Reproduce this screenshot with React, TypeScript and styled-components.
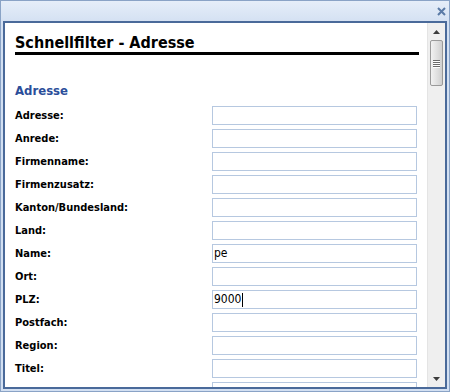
import styled, { createGlobalStyle } from "styled-components";

const GlobalStyle = createGlobalStyle`
  html, body {
    margin: 0;
    padding: 0;
    background: #ffffff;
  }
`;

const Window = styled.div`
  width: 450px;
  height: 392px;
  box-sizing: border-box;
  border: 1px solid #8aa3c6;
  background: linear-gradient(#e6eef9, #d3e0f2 22px, #d3e0f2);
  display: flex;
  flex-direction: column;
  padding: 0 2px 2px 2px;
  font-family: "DejaVu Sans Condensed", "DejaVu Sans", sans-serif;
`;

const TitleBar = styled.div`
  height: 20px;
  display: flex;
  align-items: center;
  justify-content: flex-end;
  padding-right: 1px;
`;

const CloseButton = styled.span`
  width: 10px;
  height: 10px;
  display: flex;
  align-items: center;
  justify-content: center;
`;

const Frame = styled.div`
  flex: 1;
  display: flex;
  border: 2px solid #4a6a9a;
  background: #ffffff;
  min-height: 0;
`;

const Content = styled.div`
  flex: 1;
  overflow: hidden;
  padding: 10px 0 0 10px;
`;

const Heading = styled.h1`
  margin: 0;
  width: 404px;
  font-size: 16px;
  font-weight: bold;
  color: #000000;
  line-height: 19px;
  border-bottom: 3px solid #000000;
`;

const Section = styled.h2`
  margin: 28px 0 7px 0;
  font-size: 13px;
  font-weight: bold;
  color: #2b4e9a;
  line-height: 16px;
`;

const Form = styled.div`
  display: flex;
  flex-direction: column;
  gap: 4px;
`;

const Row = styled.div`
  display: grid;
  grid-template-columns: 197px 205px;
  align-items: center;
  height: 19px;
`;

const Label = styled.label`
  font-size: 11px;
  font-weight: bold;
  color: #000000;
`;

const Field = styled.div`
  height: 19px;
  box-sizing: border-box;
  border: 1px solid #b6c8e0;
  background: #ffffff;
  font-family: "DejaVu Sans Condensed", "DejaVu Sans", sans-serif;
  font-size: 12px;
  line-height: 17px;
  padding-left: 1px;
  color: #000000;
  display: flex;
  align-items: center;
`;

const Caret = styled.span`
  display: inline-block;
  width: 1px;
  height: 14px;
  background: #000000;
  margin-left: 1px;
`;

const Scrollbar = styled.div`
  width: 17px;
  background: #efefef;
  border-left: 1px solid #e4e4e4;
  display: flex;
  flex-direction: column;
  align-items: center;
`;

const ArrowBox = styled.div`
  height: 17px;
  width: 17px;
  display: flex;
  align-items: center;
  justify-content: center;
`;

const Thumb = styled.div`
  width: 13px;
  height: 46px;
  box-sizing: border-box;
  border: 1px solid #9a9a9a;
  border-radius: 2px;
  background: linear-gradient(90deg, #f2f2f2, #dedede 60%, #cfcfcf);
  display: flex;
  flex-direction: column;
  align-items: center;
  justify-content: center;
  gap: 1px;
`;

const Grip = styled.span`
  width: 7px;
  height: 1px;
  background: #6b6b6b;
  box-shadow: 0 1px 0 #ffffff;
`;

const Track = styled.div`
  flex: 1;
`;

const fields: { label: string; value?: string; caret?: boolean }[] = [
  { label: "Adresse:" },
  { label: "Anrede:" },
  { label: "Firmenname:" },
  { label: "Firmenzusatz:" },
  { label: "Kanton/Bundesland:" },
  { label: "Land:" },
  { label: "Name:", value: "pe" },
  { label: "Ort:" },
  { label: "PLZ:", value: "9000", caret: true },
  { label: "Postfach:" },
  { label: "Region:" },
  { label: "Titel:" },
  { label: "" },
];

function App() {
  return (
    <>
      <GlobalStyle />
      <Window>
        <TitleBar>
          <CloseButton>
            <svg width="9" height="9" viewBox="0 0 9 9">
              <path d="M1 1 L8 8 M8 1 L1 8" stroke="#5a7aa6" strokeWidth="2" />
            </svg>
          </CloseButton>
        </TitleBar>
        <Frame>
          <Content>
            <Heading>Schnellfilter - Adresse</Heading>
            <Section>Adresse</Section>
            <Form>
              {fields.map((f, i) => (
                <Row key={i}>
                  <Label>{f.label}</Label>
                  <Field>
                    {f.value}
                    {f.caret && <Caret />}
                  </Field>
                </Row>
              ))}
            </Form>
          </Content>
          <Scrollbar>
            <ArrowBox>
              <svg width="7" height="4" viewBox="0 0 7 4">
                <path d="M0 4 L3.5 0 L7 4 Z" fill="#3c3c3c" />
              </svg>
            </ArrowBox>
            <Thumb>
              <Grip />
              <Grip />
              <Grip />
              <Grip />
            </Thumb>
            <Track />
            <ArrowBox>
              <svg width="7" height="4" viewBox="0 0 7 4">
                <path d="M0 0 L7 0 L3.5 4 Z" fill="#3c3c3c" />
              </svg>
            </ArrowBox>
          </Scrollbar>
        </Frame>
      </Window>
    </>
  );
}

export default App;
